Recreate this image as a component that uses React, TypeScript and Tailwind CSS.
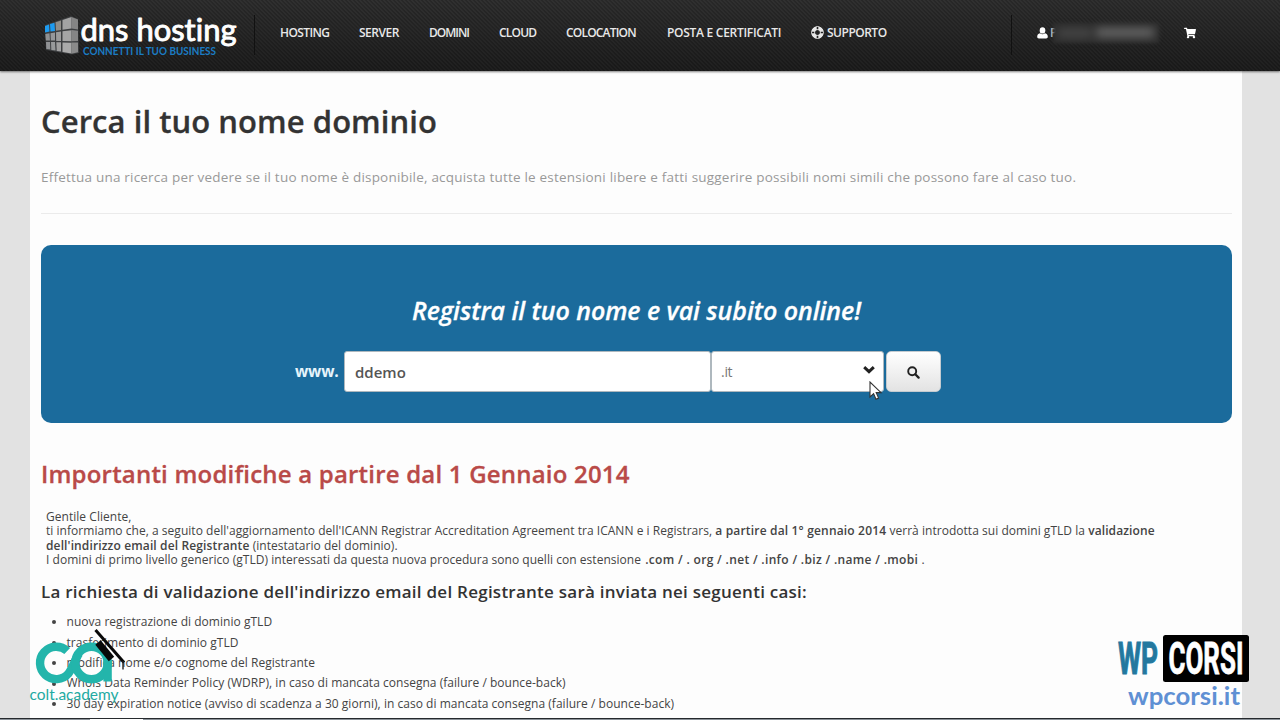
import type { ReactNode } from "react";
import { FaLifeRing, FaShoppingCart } from "react-icons/fa";

function CubeLogo() {
  return (
    <svg width="200" height="50" viewBox="40 10 200 50" className="block">
      <polygon points="45,25 71,16 78,19 79,53 72,54.5 46,50" fill="#3c3e40" />
      <polygon points="45,26 49,24.5 49.5,31.5 45,32.5" fill="#1d9bf0" />
      <polygon points="50,24 54.5,22.7 55,31 50.5,31.6" fill="#1d9bf0" />
      <polygon points="55.5,22.3 61,20.5 61,30 56,30.7" fill="#8f8d88" />
      <polygon points="62.5,20 71.5,17 71.5,28.5 62.5,29.8" fill="#a3a3a3" />
      <polygon points="45.3,34 49.5,33.3 50,40.5 45.8,40.5" fill="#8e9092" />
      <polygon points="50.5,33.2 55,32.5 55,40.5 50.8,40.5" fill="#95979a" />
      <polygon points="56,32.3 61,31.6 61,41 56.2,41" fill="#9b9b9b" />
      <polygon points="62.5,31.3 71.5,30.2 71.5,41.2 62.5,41" fill="#a5a5a5" />
      <polygon points="46,42 50,42 50.3,49.5 46.3,49" fill="#909294" />
      <polygon points="51,42 55,42 55.5,50.5 51.3,50" fill="#989a9b" />
      <polygon points="56.3,42.3 61,42.3 61,51.6 56.7,50.9" fill="#a0a0a0" />
      <polygon points="62.5,42.4 71.5,42.7 71.5,53.5 62.5,52" fill="#aaaaaa" />
      <polygon points="71.5,17 78,19.5 78,29.5 71.5,28.5" fill="#858585" />
      <polygon points="71.5,30 78,30.8 78,41 71.5,41.2" fill="#858585" />
      <polygon points="71.5,42.6 78,42.4 78,52.3 71.5,53.7" fill="#8a8a8a" />
      <text x="80.5" y="41" textLength="156" lengthAdjust="spacingAndGlyphs" fill="#fff" stroke="#fff" strokeWidth="0.9" strokeLinejoin="round" className="font-['Lato',sans-serif] text-[30px] font-normal [font-variant-ligatures:none]">dns hosting</text>
      <text x="83" y="54.5" textLength="133" lengthAdjust="spacingAndGlyphs" fill="#1b7cc4" className="font-['Lato',sans-serif] text-[10.5px] font-bold [font-variant-ligatures:none]">CONNETTI IL TUO BUSINESS</text>
    </svg>
  );
}

function UserIcon() {
  return (
    <svg width="11" height="12" viewBox="0 0 11 12" fill="#fff" className="block">
      <ellipse cx="5.5" cy="3.4" rx="2.8" ry="3.2" />
      <path d="M3 6.2C1 6.5 0.2 7.8 0.2 9.8 0.2 10.9 0.9 11.5 1.9 11.5H9.1C10.1 11.5 10.8 10.9 10.8 9.8 10.8 7.8 10 6.5 8 6.2 6.6 7.5 4.4 7.5 3 6.2Z" />
    </svg>
  );
}

function SearchIcon() {
  return (
    <svg width="13" height="13" viewBox="0 0 13 13" fill="none" stroke="#222" className="mt-[2px] block">
      <circle cx="5.2" cy="5.2" r="4" strokeWidth="1.9" />
      <path d="M8.3 8.3L11.6 11.6" strokeWidth="2.3" strokeLinecap="round" />
    </svg>
  );
}

function Pointer() {
  return (
    <svg width="14" height="20" viewBox="0 0 14 20" className="absolute left-[869px] top-[381px]">
      <path d="M1 1V16L4.6 12.6L7 18.2L9.6 17.1L7.2 11.6H12Z" fill="#fff" stroke="#333" strokeWidth="1.1" />
    </svg>
  );
}

function ColtAcademy() {
  return (
    <svg width="110" height="85" viewBox="25 625 110 85" className="absolute left-[25px] top-[625px]">
      <path d="M67.2 651A16.2 16.2 0 1 0 68.5 673.5C72 669 75 660 79 653.5" fill="none" stroke="#23b5ab" strokeWidth="8.4" />
      <circle cx="91.5" cy="663" r="16.2" fill="none" stroke="#23b5ab" strokeWidth="8.4" />
      <path d="M107.6 660V681.5" stroke="#23b5ab" strokeWidth="8.4" />
      <path d="M98 642.5L111.5 659" stroke="#080808" strokeWidth="7" />
      <path d="M95.5 630L124 662.5" stroke="#080808" strokeWidth="3" />
      <path d="M123 661V669.5" stroke="#222" strokeWidth="1.4" />
      <text x="29.5" y="699.5" textLength="89" lengthAdjust="spacingAndGlyphs" fill="#23aaa2" className="font-['Lato',sans-serif] text-[15px] font-normal">colt.academy</text>
    </svg>
  );
}

function WpCorsi() {
  return (
    <svg width="140" height="80" viewBox="1115 632 140 80" className="absolute left-[1115px] top-[632px]">
      <rect x="1163" y="635" width="86" height="47" rx="2.5" fill="#000" />
      <text x="1118" y="674" textLength="40" lengthAdjust="spacingAndGlyphs" fill="#23789f" stroke="#23789f" strokeWidth="1" className="font-['Roboto',sans-serif] text-[44px] font-bold">WP</text>
      <text x="1168.5" y="674" textLength="75" lengthAdjust="spacingAndGlyphs" fill="#fff" stroke="#fff" strokeWidth="0.8" className="font-['Roboto',sans-serif] text-[44px] font-bold">CORSI</text>
      <text x="1128" y="704.5" textLength="112" lengthAdjust="spacingAndGlyphs" fill="#5f90d4" className="font-['Lato',sans-serif] text-[25px] font-bold">wpcorsi.it</text>
    </svg>
  );
}

function NavItem({ className, children }: { className: string; children: ReactNode }) {
  return <a className={`flex shrink-0 items-center whitespace-nowrap ${className}`}>{children}</a>;
}

const CASES = [
  "nuova registrazione di dominio gTLD",
  "trasferimento di dominio gTLD",
  "modifica nome e/o cognome del Registrante",
  "Whois Data Reminder Policy (WDRP), in caso di mancata consegna (failure / bounce-back)",
  "30 day expiration notice (avviso di scadenza a 30 giorni), in caso di mancata consegna (failure / bounce-back)",
];

export default function App() {
  return (
    <div className="relative flex h-[720px] w-[1280px] flex-col overflow-hidden bg-[#e2e2e2] font-['Open_Sans',sans-serif] text-[#444]">
      <header className="z-10 h-[71px] shrink-0 bg-linear-to-b from-[#2c2c2c] to-[#1b1b1b] shadow-[0_1px_2px_rgba(0,0,0,0.5)]">
        <div className="flex h-full bg-[linear-gradient(45deg,rgba(0,0,0,0.09)_25%,rgba(255,255,255,0.018)_25%,rgba(255,255,255,0.018)_50%,rgba(0,0,0,0.09)_50%,rgba(0,0,0,0.09)_75%,rgba(255,255,255,0.018)_75%)] bg-[length:4px_4px] pl-10">
          <div className="w-[214px] shrink-0 pt-[10px]"><CubeLogo /></div>
          <div className="mt-[15px] h-[40px] w-px shrink-0 bg-[#111]" />
          <nav className="flex h-[65px] w-[756px] shrink-0 items-center pl-[25px] text-xs font-semibold text-[#e8e8e8]">
            <NavItem className="w-[79px] tracking-[-0.6px]">HOSTING</NavItem>
            <NavItem className="w-[70px] tracking-[-0.5px]">SERVER</NavItem>
            <NavItem className="w-[70px] tracking-[-1px]">DOMINI</NavItem>
            <NavItem className="w-[67px] tracking-[-0.8px]">CLOUD</NavItem>
            <NavItem className="w-[101px] tracking-[-0.8px]">COLOCATION</NavItem>
            <NavItem className="w-[144px] tracking-[-0.28px]">POSTA E CERTIFICATI</NavItem>
            <NavItem className="gap-[3px] tracking-[-0.5px]"><FaLifeRing size={13} className="rotate-45" />SUPPORTO</NavItem>
          </nav>
          <div className="mt-[15px] h-[40px] w-px shrink-0 bg-[#111]" />
          <div className="flex h-[65px] items-center pl-[25px] text-xs font-semibold text-[#ddd]">
            <UserIcon />
            <span className="ml-[2px] w-[8px]">P</span>
            <span className="relative -ml-[5px] flex h-[20px] w-[106px] items-center justify-center gap-1 bg-[#2d2d2d] blur-[1.5px]">
              <span className="h-[8px] w-[34px] bg-[#494949] blur-[4px]" />
              <span className="h-[9px] w-[58px] bg-[#676767] blur-[4px]" />
            </span>
            <FaShoppingCart size={12} className="ml-[25px] text-white" />
          </div>
        </div>
      </header>

      <main className="ml-[30px] flex w-[1212px] grow flex-col bg-[#fdfdfd] pr-[10px] pl-[11px]">
        <h1 className="mt-[28px] text-[31px] leading-[44px] font-semibold tracking-[0.06px] text-[#333] [-webkit-text-stroke:0.3px_#333]">Cerca il tuo nome dominio</h1>
        <p className="mt-[24px] text-[13.5px] leading-5 tracking-[0.205px] whitespace-nowrap text-[#999]">
          Effettua una ricerca per vedere se il tuo nome è disponibile, acquista tutte le estensioni libere e fatti suggerire possibili nomi simili che possono fare al caso tuo.
        </p>
        <hr className="mt-[26px] border-[#ebebeb]" />

        <section className="mt-[31px] h-[177.5px] shrink-0 rounded-[10px] bg-[#1b6b9c] pt-[47px]">
          <h2 className="text-center text-[25px] leading-[36px] font-semibold tracking-[-0.05px] text-white italic [-webkit-text-stroke:0.3px_#fff]">Registra il tuo nome e vai subito online!</h2>
          <form className="mt-[23px] flex h-[41px] items-center pl-[254px]">
            <label className="w-[49px] text-[15.5px] font-bold tracking-[-0.2px] text-[#e6f4fb]">www.</label>
            <div className="flex h-[41px] w-[367px] items-center rounded-[3px] border border-[#aeb8be] bg-white pt-[2px] pl-[10px] text-[15px] font-semibold text-[#555]">ddemo</div>
            <div className="flex h-[41px] w-[173px] items-center justify-between rounded-[3px] border border-[#aeb8be] bg-white pr-[8px] pl-[9px]">
              <span className="text-sm tracking-[-0.3px] text-[#777]">.it</span>
              <svg width="12" height="8" viewBox="0 0 12 8" className="mb-[3px]" fill="none" stroke="#222" strokeWidth="3"><path d="M1.2 1.2L6 5.6L10.8 1.2" /></svg>
            </div>
            <div className="ml-[2px] flex h-[41px] w-[55px] items-center justify-center rounded-[5px] border border-[#c4cbd0] bg-linear-to-b from-white to-[#e3e3e3]"><SearchIcon /></div>
          </form>
        </section>

        <h2 className="mt-[33px] text-[24px] leading-[36px] font-semibold tracking-[0.2px] text-[#b94a48] [-webkit-text-stroke:0.3px_#b94a48]">Importanti modifiche a partire dal 1 Gennaio 2014</h2>
        <div className="mt-[18.5px] ml-[5px] text-xs leading-[14.3px] tracking-[0.035px] whitespace-nowrap">
          <p>Gentile Cliente,</p>
          <p>ti informiamo che, a seguito dell'aggiornamento dell'ICANN Registrar Accreditation Agreement tra ICANN e i Registrars, <b className="font-semibold tracking-[0.17px]">a partire dal 1° gennaio 2014</b> verrà introdotta sui domini gTLD la <b className="font-semibold tracking-[0.1px]">validazione</b></p>
          <p><b className="font-semibold tracking-[0.13px]">dell'indirizzo email del Registrante</b> (intestatario del dominio).</p>
          <p>I domini di primo livello generico (gTLD) interessati da questa nuova procedura sono quelli con estensione <b className="ml-px font-semibold tracking-[0.33px]">.com / . org / .net / .info / .biz / .name / .mobi</b> .</p>
        </div>
        <h3 className="mt-[13px] text-[17px] leading-6 font-semibold tracking-[0.25px] text-[#333]">La richiesta di validazione dell'indirizzo email del Registrante sarà inviata nei seguenti casi:</h3>
        <ul className="mt-[8px] text-xs leading-[20.4px] tracking-[0.03px] whitespace-nowrap">
          {CASES.map((text) => (
            <li key={text} className="flex items-center"><span className="mr-[10.5px] ml-[11px] size-[4px] rounded-full bg-[#444]" />{text}</li>
          ))}
        </ul>
      </main>

      <Pointer />
      <ColtAcademy />
      <WpCorsi />
      <footer className="absolute bottom-0 left-0 h-[2px] w-full border-t border-[#25292d] bg-[#8b9299]">
        <div className="ml-[90px] h-px w-[53px] bg-white" />
      </footer>
    </div>
  );
}
